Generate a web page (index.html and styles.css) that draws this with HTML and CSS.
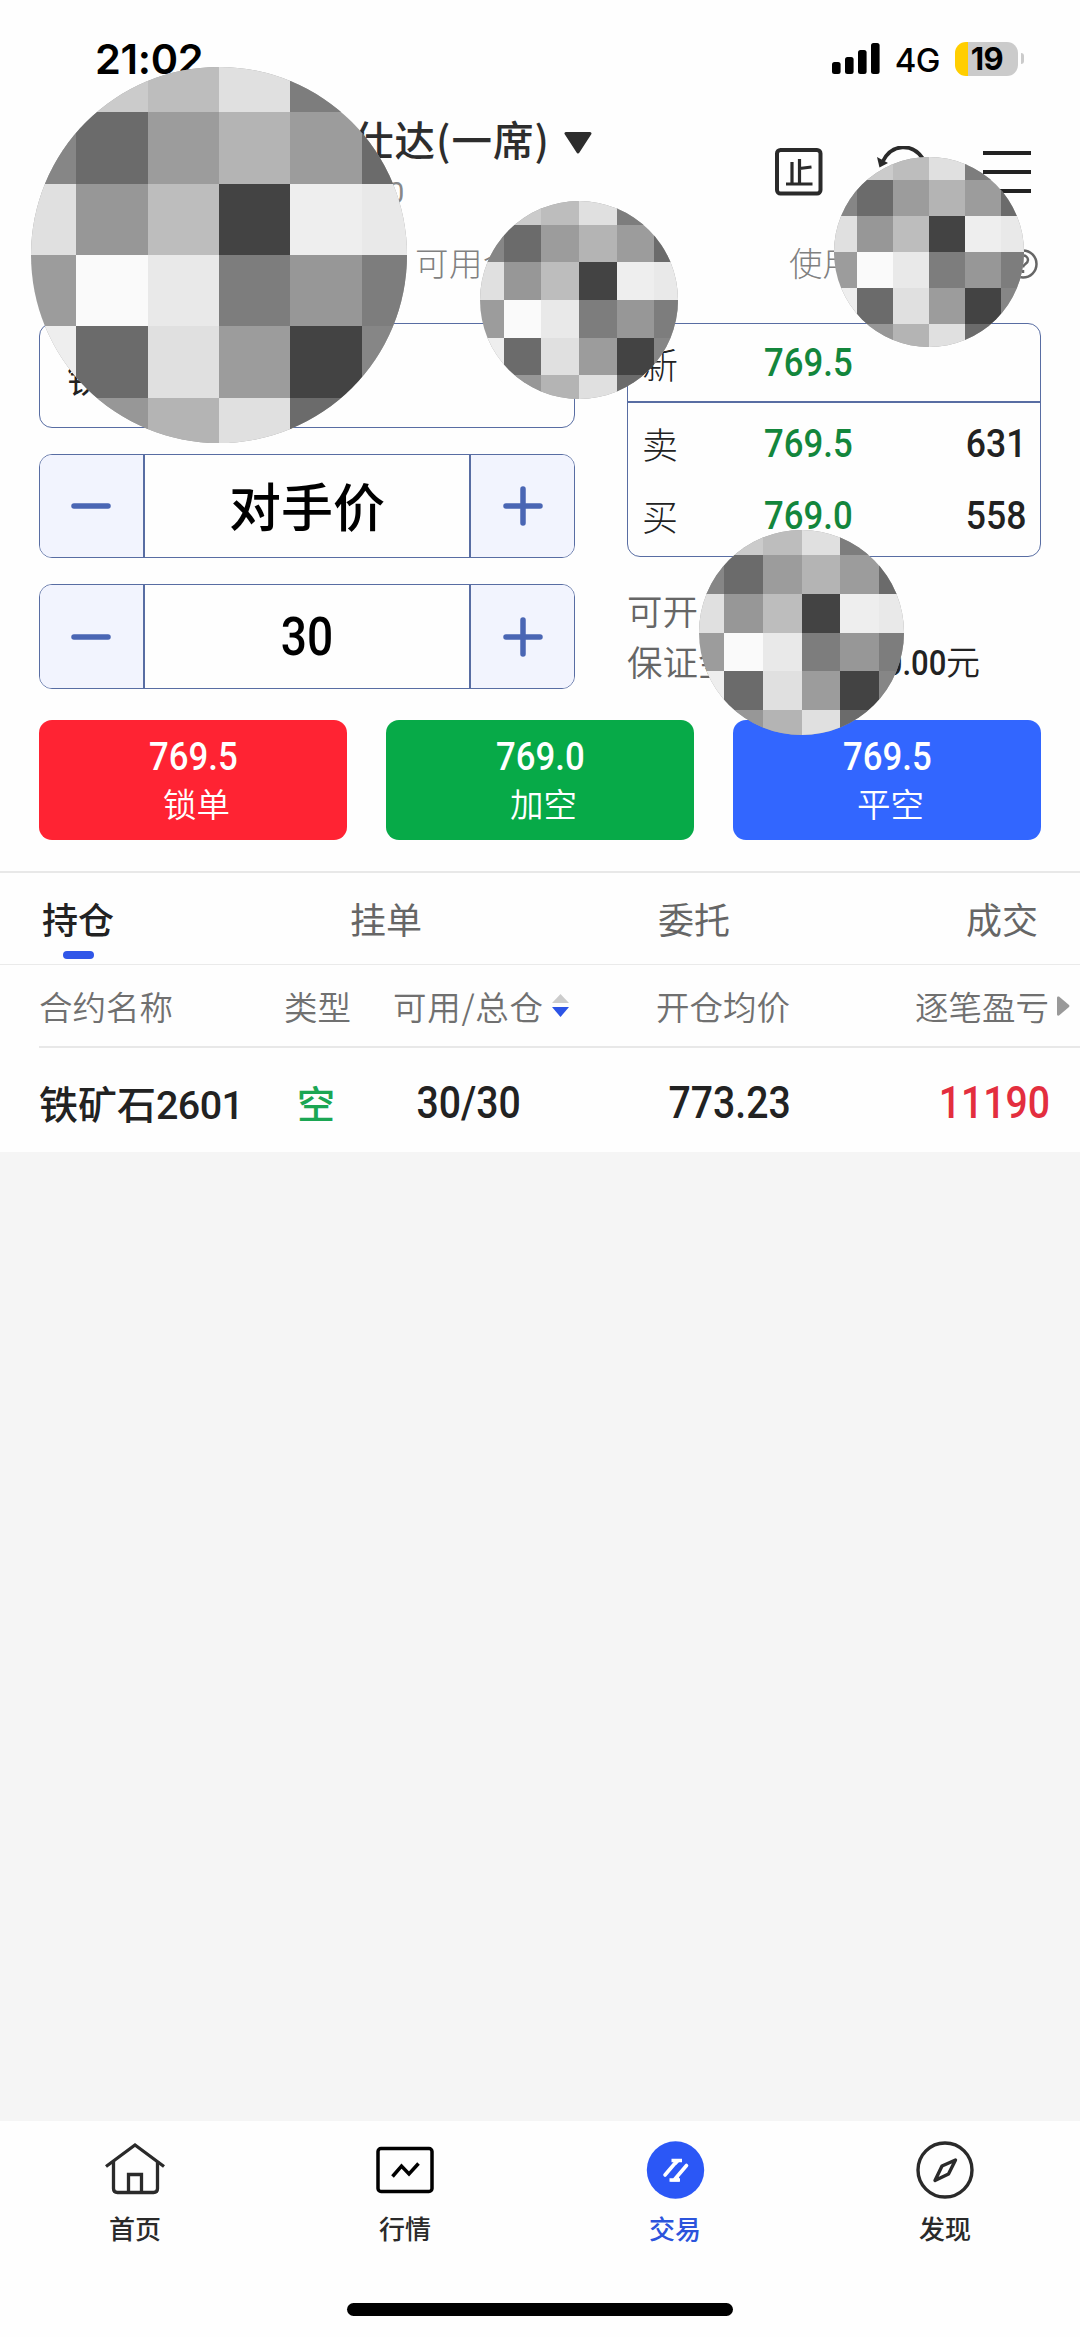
FILE: index.html
```html
<!DOCTYPE html>
<html lang="zh-CN">
<head>
<meta charset="utf-8">
<title>交易</title>
<link rel="stylesheet" href="styles.css">
</head>
<body>
<svg class="defs" width="0" height="0" aria-hidden="true">
  <symbol id="mosaic" viewBox="-2.63 -2.63 5.26 5.26">
    <clipPath id="round"><circle r="2.63"/></clipPath>
    <g clip-path="url(#round)" shape-rendering="crispEdges">
      <rect x="-3" y="-3" width="6" height="6" fill="#9c9c9c"/>
      <path fill="#cbcbcb" d="M-3-3h2v1h-2z"/>
      <path fill="#bdbdbd" d="M-1-3h1v1h-1zM-1-1h1v1h-1z"/>
      <path fill="#e0e0e0" d="M0-3h1v1H0zM-3-1h1v1h-1zM-1 1h1v1h-1zM0 2h1v1H0z"/>
      <path fill="#7d7d7d" d="M1-3h2v1H1zM0 0h1v1H0zM2 0h1v1H2z"/>
      <path fill="#868686" d="M-3-2h1v1h-1zM2 1h1v1H2z"/>
      <path fill="#6b6b6b" d="M-2-2h1v1h-1zM2-2h1v1H2zM-2 1h1v1h-1zM1 2h2v1H1z"/>
      <path fill="#b4b4b4" d="M0-2h1v1H0zM-1 2h1v1h-1z"/>
      <path fill="#979797" d="M-2-1h1v1h-1zM1 0h1v1H1zM-3 2h2v1h-2z"/>
      <path fill="#434343" d="M0-1h1v1H0zM1 1h1v1H1z"/>
      <path fill="#eee" d="M1-1h1v1H1zM-3 1h1v1h-1z"/>
      <path fill="#e9e9e9" d="M2-1h1v1H2zM-1 0h1v1h-1z"/>
      <path fill="#fafafa" d="M-2 0h1v1h-1z"/>
    </g>
  </symbol>
</svg>

<header class="status">
  <span class="clock">21:02</span>
  <div class="status-right">
    <svg class="signal" width="48" height="31" viewBox="0 0 48 31"><rect y="19" width="8.6" height="12" rx="2.5"/><rect x="13" y="14" width="8.6" height="17" rx="2.5"/><rect x="26" y="7" width="8.6" height="24" rx="2.5"/><rect x="39" width="8.6" height="31" rx="2.5"/></svg>
    <span class="network">4G</span>
    <span class="battery">19</span>
    <i class="nub"></i>
  </div>
</header>

<section class="account">
  <div class="account-name">
    <div class="title">仕达(一席)<svg width="28" height="23" viewBox="0 0 28 23"><path d="M2 1.5h24L14 20z" fill="#2d2d2d" stroke="#2d2d2d" stroke-width="3" stroke-linejoin="round"/></svg></div>
    <div class="account-id">0</div>
  </div>
  <div class="tools">
    <svg width="48" height="48" viewBox="0 0 48 48"><g fill="none" stroke="#2a2a2a"><rect x="2" y="2" width="43.5" height="43.5" rx="3.5" stroke-width="4"/><path stroke-width="3.2" d="M11 36h26.500M17 14v22M24.500 11v25M24.500 20.500l12-1.500"/></g></svg>
    <svg width="52" height="52" viewBox="0 0 52 52"><path d="M6 15C15-2.500 35-3 45.500 12M47 34C38 53 14 52 5 36" fill="none" stroke="#2a2a2a" stroke-width="3.800"/><path d="M0 11l11 6-8.500 4.500z" fill="#2a2a2a"/></svg>
    <svg width="48" height="44" viewBox="0 0 48 44"><path d="M0 3h48M0 22h48M0 41h48" stroke="#222" stroke-width="4.200"/></svg>
  </div>
</section>

<section class="funds">
  <span class="available">可用金</span>
  <span class="used">使用</span>
  <svg width="30" height="30" viewBox="0 0 30 30"><circle cx="15" cy="15" r="13.500" fill="none" stroke="#666" stroke-width="2.500"/><path d="M10 12c0-7 10-7 10-1 0 4-5 4-5 7.500M15 21v3" fill="none" stroke="#666" stroke-width="2.500"/></svg>
</section>

<section class="trade">
  <div class="inputs">
    <div class="contract">铁</div>
    <div class="stepper">
      <button><svg width="40" height="40" viewBox="0 0 40 40"><path d="M3 20h34"/></svg></button>
      <b class="mode">对手价</b>
      <button><svg width="40" height="40" viewBox="0 0 40 40"><path d="M3 20h34M20 3v34"/></svg></button>
    </div>
    <div class="stepper">
      <button><svg width="40" height="40" viewBox="0 0 40 40"><path d="M3 20h34"/></svg></button>
      <b class="num amount">30</b>
      <button><svg width="40" height="40" viewBox="0 0 40 40"><path d="M3 20h34M20 3v34"/></svg></button>
    </div>
  </div>
  <div class="market">
    <div class="quotes">
      <div class="quote last"><span>新</span><b class="num price">769.5</b></div>
      <div class="quote"><span>卖</span><b class="num price">769.5</b><b class="num volume">631</b></div>
      <div class="quote"><span>买</span><b class="num price">769.0</b><b class="num volume">558</b></div>
    </div>
    <div class="limits">
      <div>可开</div>
      <div class="margin"><span>保证金</span><span class="sum"><b class="num">0.00</b>元</span></div>
    </div>
  </div>
</section>

<section class="orders">
  <button class="lock"><b class="num">769.5</b><span>锁单</span></button>
  <button class="sell"><b class="num">769.0</b><span>加空</span></button>
  <button class="close"><b class="num">769.5</b><span>平空</span></button>
</section>

<nav class="tabs"><a class="active">持仓</a><a>挂单</a><a>委托</a><a>成交</a></nav>

<section class="positions">
  <div class="row head">
    <span>合约名称</span><span class="c-type">类型</span>
    <span class="c-total">可用/总仓<svg width="17" height="23" viewBox="0 0 17 23"><path d="M0 9L8.500 0 17 9z" fill="#ccc"/><path d="M0 13h17l-8.500 10z" fill="#2c54e6"/></svg></span>
    <span class="c-open">开仓均价</span>
    <span class="c-profit">逐笔盈亏<svg width="13" height="20" viewBox="0 0 13 20"><path d="M0 1.500Q0 0 2 0.500L12 9q1 1 0 2L2 19.500Q0 20 0 18.500z" fill="#999"/></svg></span>
  </div>
  <div class="row item">
    <span>铁矿石<span class="code">2601</span></span><span class="side">空</span>
    <b class="num total">30/30</b><b class="num open">773.23</b><b class="num profit">11190</b>
  </div>
</section>

<main class="blank"></main>

<footer class="bottom">
  <nav class="menu">
    <a><svg width="60" height="60" viewBox="0 0 60 60"><g fill="none" stroke="#2a2a2a" stroke-width="3.300"><path d="M1 26.500L30 5l29 21.500"/><path d="M8.500 21v27.500q0 4 4 4h36q4 0 4-4V21"/><path d="M23.500 52V34.500h13V52"/></g></svg>首页</a>
    <a><svg width="60" height="60" viewBox="0 0 60 60"><g fill="none" stroke="#000" stroke-width="3.500"><rect x="3" y="8.500" width="54" height="43" rx="3"/><path d="M17.500 36.500L26.500 26l7.500 8L43.500 23.500"/></g></svg>行情</a>
    <a class="current"><svg width="60" height="60" viewBox="0 0 60 60"><circle cx="30.500" cy="30" r="28.700" fill="#2b57f6"/><g fill="none" stroke="#fff" stroke-width="3.600"><path stroke-linecap="round" d="M20 35L31.500 21.500M41.500 25.500L30 39"/><path d="M26.500 20.500h10.500M24.500 40h10.500"/></g><path fill="#fff" d="M28 19h9l-6 6zM25 41.500h9V36z"/></svg>交易</a>
    <a><svg width="60" height="60" viewBox="0 0 60 60"><g fill="none" stroke="#2a2a2a" stroke-width="3.400" stroke-linejoin="round"><circle cx="30" cy="30" r="27"/><path d="M40.500 20L27 26 20 40.500 33.500 34z"/></g></svg>发现</a>
  </nav>
  <i class="home-bar"></i>
</footer>

<svg class="mask mask-name"><use href="#mosaic"/></svg>
<svg class="mask mask-available"><use href="#mosaic"/></svg>
<svg class="mask mask-used"><use href="#mosaic"/></svg>
<svg class="mask mask-margin"><use href="#mosaic"/></svg>
</body>
</html>
```
FILE: styles.css
```css
* { box-sizing: border-box; }
body {
  position: relative;
  margin: 0;
  width: 1080px;
  height: 2337px;
  overflow: hidden;
  display: flex;
  flex-direction: column;
  background: #fefefe;
  color: #222;
  font-family: "Noto Sans CJK SC", sans-serif;
}
svg { display: block; flex: none; }
.defs { position: absolute; }
button { border: 0; padding: 0; font: inherit; color: inherit; }
b { font-weight: 500; }

/* Narrow figures used for every price and volume */
.num {
  display: inline-block;
  font-family: Roboto, sans-serif;
  font-weight: 500;
  transform: scaleX(.9);
}

.status {
  height: 117px;
  padding: 0 56px 0 95px;
  display: flex;
  align-items: center;
  justify-content: space-between;
  font-family: Inter, sans-serif;
  color: #000;
}
.clock { font-size: 41.5px; font-weight: 600; letter-spacing: -.3px; }
.status-right { display: flex; align-items: center; }
.network { margin: 3px 15px 0 15px; font-size: 33px; font-weight: 450; letter-spacing: -.5px; }
.battery {
  width: 63px;
  height: 34px;
  line-height: 34px;
  padding-left: 1px;
  border-radius: 11px;
  background: linear-gradient(90deg, #ffce00 13px, #cbcbcb 13px);
  text-align: center;
  font-size: 31px;
  font-weight: 700;
  letter-spacing: -.5px;
}
.nub { width: 3px; height: 11px; margin-left: 3px; border-radius: 0 3px 3px 0; background: #cbcbcb; }

.account {
  height: 110px;
  padding: 0 49px 0 353px;
  display: flex;
  align-items: center;
  justify-content: space-between;
}
.account-name { align-self: flex-start; }
.title {
  display: flex;
  align-items: center;
  gap: 14px;
  line-height: 44px;
  font-size: 40.5px;
  font-weight: 450;
  letter-spacing: 1px;
  color: #2d2d2d;
}
.title svg { margin-top: 8px; }
.account-id { padding-left: 35px; font: 29px/64px Roboto, sans-serif; color: #888; }
.tools { display: flex; align-items: center; gap: 54px; }

.funds {
  height: 70px;
  padding: 0 42px 0 415px;
  display: flex;
  align-items: center;
  font-size: 33.5px;
  font-weight: 300;
  line-height: 70px;
  color: #808080;
}
.available { letter-spacing: .5px; }
.used { margin-left: auto; }
.funds svg { margin: 3px 0 0 152px; }

.trade {
  margin-top: 26px;
  padding: 0 39px;
  display: grid;
  grid-template-columns: 536px 414px;
  justify-content: space-between;
}
.inputs { display: grid; gap: 26px; grid-auto-rows: 104.5px; }
.contract, .stepper, .quotes { border: 1.500px solid #586da3; border-radius: 13px; }
.contract { padding-left: 27px; line-height: 106px; font-size: 36px; }
.stepper {
  display: grid;
  grid-template-columns: 105px 1fr 105px;
  overflow: hidden;
  text-align: center;
  color: #000;
}
.stepper button { display: grid; place-items: center; background: #f2f4fe; }
.stepper button:first-child { padding-right: 2px; border-right: 2px solid #586da3; }
.stepper button:last-child { border-left: 2px solid #586da3; }
.stepper path { fill: none; stroke: #4a66b4; stroke-width: 5.500; stroke-linecap: round; }
.mode { font-size: 52px; line-height: 100px; }
.amount { font-size: 53px; line-height: 104px; }
.stepper .amount { transform: scaleX(.87); }

.quotes { height: 234px; padding-bottom: 9px; }
.quote {
  height: 72px;
  padding: 0 14px;
  display: grid;
  grid-template-columns: 122px 1fr auto;
  align-items: center;
  font-size: 36px;
  font-weight: 300;
}
.quote .num { font-size: 39.5px; }
.quote.last { height: 79px; border-bottom: 2px solid #586da3; }
.quote:nth-child(2) { margin-top: 4px; }
.quote .price { color: #13863c; transform-origin: left; transform: scaleX(.88); }
.volume { transform-origin: right; }
.limits { margin-top: 27px; font-size: 35.500px; font-weight: 350; line-height: 51px; color: #666; }
.margin { display: flex; justify-content: space-between; }
.sum { padding-right: 61px; color: #222; font-size: 34px; }
.sum .num { transform-origin: right; font-weight: 500; font-size: 34.500px; }

.orders {
  margin-top: 31px;
  padding: 0 39px;
  display: grid;
  grid-template-columns: repeat(3, 308px);
  justify-content: space-between;
}
.orders button {
  height: 120px;
  padding-top: 14px;
  border-radius: 13px;
  display: flex;
  flex-direction: column;
  align-items: center;
  color: #fff;
}
.orders .num { font-size: 39.500px; line-height: 46px; transform: scaleX(.88); }
.orders span { padding-left: 7px; font-size: 33.500px; font-weight: 350; line-height: 45px; }
.lock { background: #ff2333; }
.sell { background: #07aa48; }
.close { background: #3266ff; }

.tabs {
  margin-top: 31px;
  height: 94px;
  padding: 0 42px;
  display: flex;
  justify-content: space-between;
  border-top: 2px solid #e8e8e8;
  border-bottom: 1px solid #eaeaea;
  font-size: 36px;
  line-height: 90px;
  color: #666;
}
.active { display: grid; grid-template-rows: 78px 8px; font-weight: 500; color: #222; }
.active::after { content: ""; width: 31px; height: 8px; border-radius: 4px; background: #3056e8; margin-left: 21px; }

.row {
  display: grid;
  grid-template-columns: 245px 109px 263px 259px 1fr;
  align-items: center;
  margin-left: 39px;
}
.head { height: 83px; border-bottom: 2px solid #e8e8e8; font-size: 33.500px; font-weight: 350; line-height: 80px; color: #707070; }
.c-total { letter-spacing: .7px; }
.c-total, .c-profit { display: flex; align-items: center; gap: 8px; }
.item { height: 104px; font-size: 39px; font-weight: 500; line-height: 102px; }
.code { font: 500 39.500px/1 Roboto, sans-serif; letter-spacing: -.6px; }
.side { padding-left: 13px; color: #1ba653; font-size: 38px; }
.item .num { padding-top: 4px; font-size: 43.500px; line-height: 104px; transform-origin: left; }
.total { padding-left: 26px; }
.open { padding-left: 14px; }
.profit { justify-self: end; padding-right: 33px; color: #e32e3e; }
.item .profit { transform-origin: right; }

.blank { flex: 1; background: #f5f5f5; }

.bottom { height: 216px; }
.menu { height: 182px; padding-top: 19px; display: grid; grid-template-columns: repeat(4, 270px); }
.menu a {
  display: flex;
  flex-direction: column;
  align-items: center;
  gap: 10px;
  font-size: 26px;
  font-weight: 450;
  line-height: 35px;
  color: #2a2a2a;
}
.menu .current { color: #2c54dc; }
.home-bar { display: block; width: 386px; height: 13px; margin: 0 auto; border-radius: 7px; background: #000; }

.mask { position: absolute; }
.mask-name { left: 31px; top: 67px; width: 376px; height: 376px; }
.mask-available { left: 480px; top: 200.500px; width: 198px; height: 198px; }
.mask-used { left: 834px; top: 157px; width: 190px; height: 190px; }
.mask-margin { left: 698.500px; top: 529.500px; width: 205px; height: 205px; }
```
